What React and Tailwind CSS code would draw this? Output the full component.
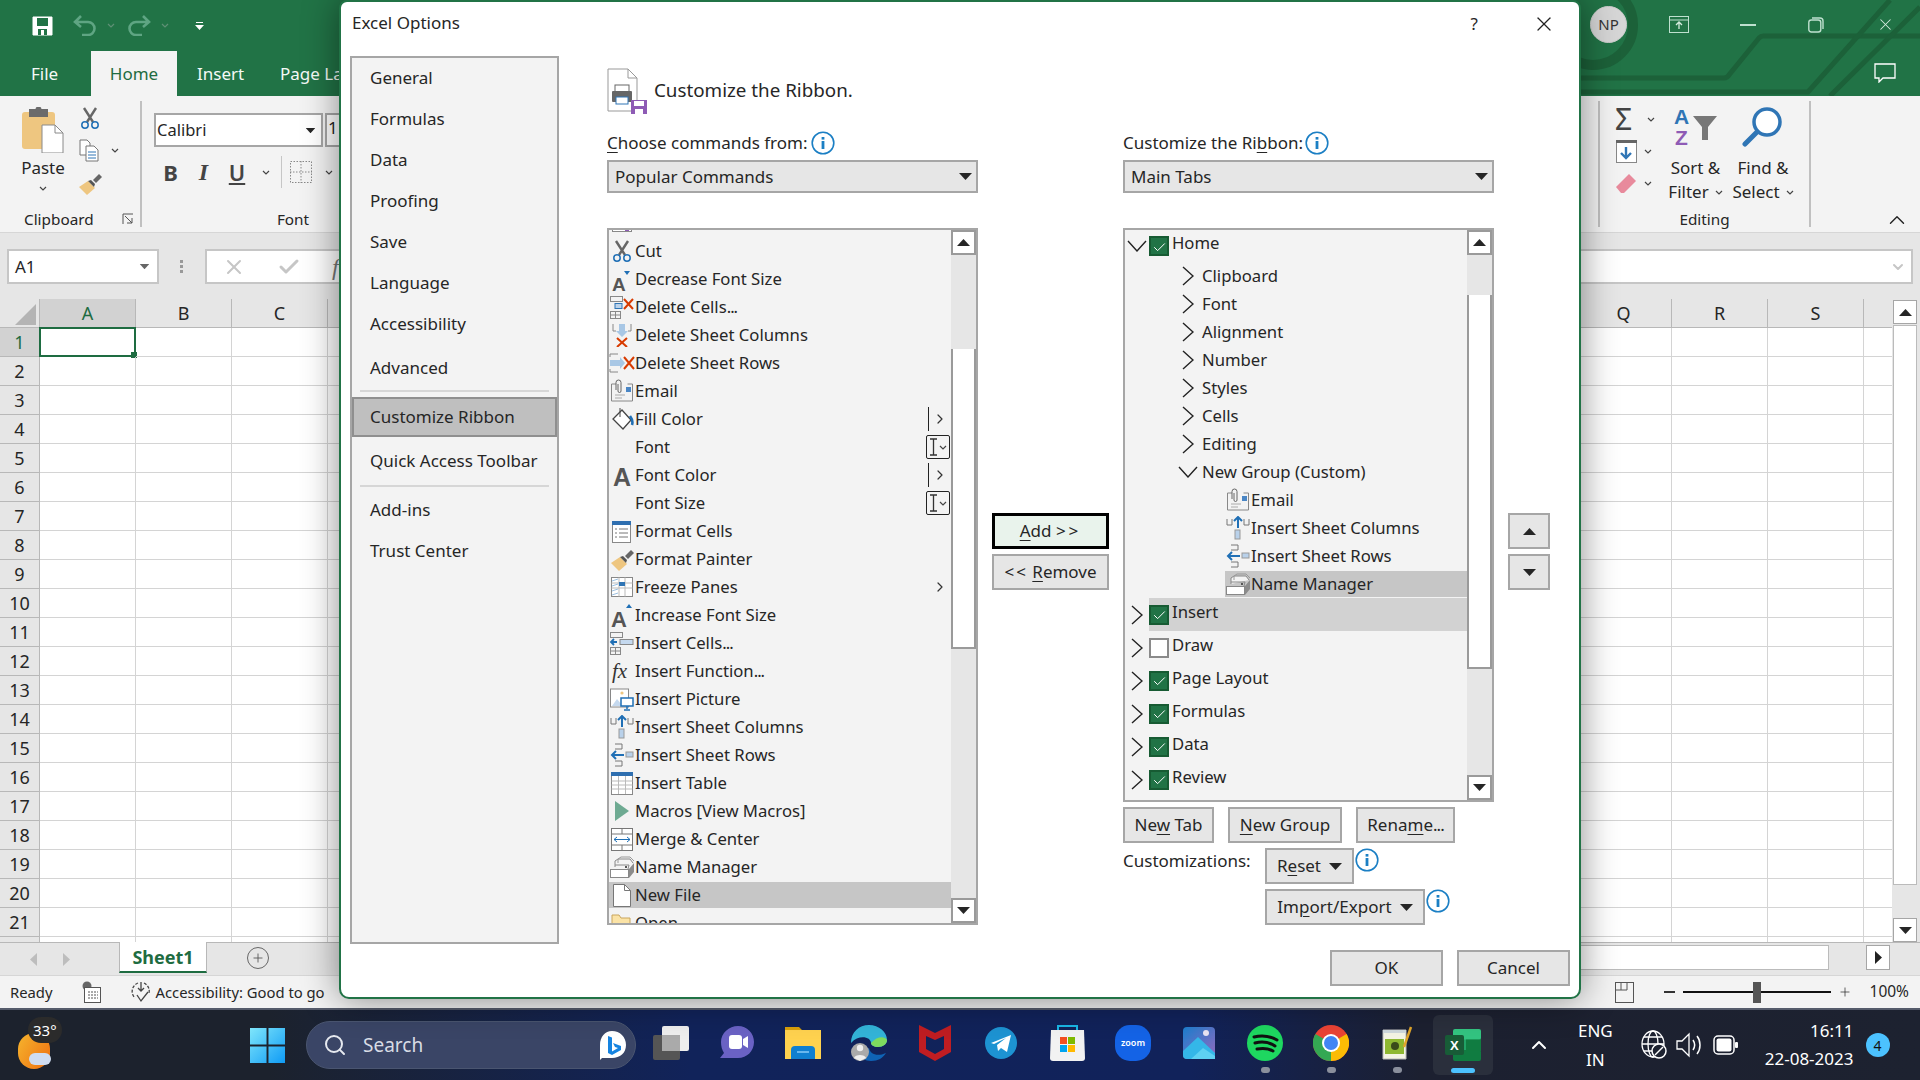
import { Check, ChevronDown, ChevronRight, ChevronUp, Plus, Search, X } from "lucide-react";

const Ico = ({ w = 24, h = 24, children, className = "" }) => (
  <svg width={w} height={h} viewBox={`0 0 ${w} ${h}`} fill="none" className={`shrink-0 ${className}`}>
    {children}
  </svg>
);

const SmallChev = ({ className = "" }) => (
  <svg width="8" height="5" viewBox="0 0 8 5" fill="none" className={`shrink-0 ${className}`}>
    <path d="M1 1l3 3 3-3" stroke="#444" strokeWidth="1.2" />
  </svg>
);

const Tri = ({ up = false, className = "" }) => (
  <svg width="13" height="7" viewBox="0 0 13 7" className={`shrink-0 ${className}`}>
    <path d={up ? "M0 7h13L6.5 0z" : "M0 0h13L6.5 7z"} fill="#262626" />
  </svg>
);

const Info = () => (
  <svg width="24" height="24" viewBox="0 0 24 24" fill="none" className="shrink-0">
    <circle cx="12" cy="12" r="10.8" stroke="#1b7fc4" strokeWidth="1.6" fill="#fff" />
    <rect x="10.6" y="10" width="2.8" height="8" fill="#1b7fc4" />
    <rect x="10.6" y="6" width="2.8" height="2.6" fill="#1b7fc4" />
  </svg>
);

const Dots = () => <span className="tracking-[-1px]">...</span>;

/* ---------- command icons ---------- */
const CutIcon = () => (
  <Ico>
    <path d="M6 2l9 14M18 2L9 16" stroke="#666" strokeWidth="2.4" />
    <circle cx="7" cy="19" r="3.2" stroke="#1f6fb5" strokeWidth="1.5" />
    <circle cx="17" cy="19" r="3.2" stroke="#1f6fb5" strokeWidth="1.5" />
  </Ico>
);
const LetterA = ({ size = 22, x = 1, y = 23, extra }) => (
  <Ico>
    <text x={x} y={y} fontSize={size} fontWeight="700" fill="#555" fontFamily="Liberation Sans, sans-serif">A</text>
    {extra}
  </Ico>
);
const DecFont = () => <LetterA size={19} x={2} y={24} extra={<path d="M14 4h6l-3 4z" fill="#1f6fb5" />} />;
const IncFont = () => <LetterA size={22} x={1} y={24} extra={<path d="M16 5h6l-3-4z" fill="#1f6fb5" />} />;
const FontColor = () => <LetterA size={25} x={3} y={23} />;
const Cells = () => (
  <g stroke="#888" strokeWidth="1" fill="#f3f3f3">
    <rect x="1.5" y="1.5" width="12" height="5" />
    <rect x="1.5" y="16.5" width="10" height="7" />
    <path d="M6.5 16.5v7M1.5 20h10" />
  </g>
);
const DelCells = () => (
  <Ico w={26}>
    <Cells />
    <rect x="6" y="8.5" width="7" height="5" stroke="#2f75b5" fill="#bcd3ea" />
    <path d="M15 4l9 10M24 4l-9 10" stroke="#d83b01" strokeWidth="2" />
  </Ico>
);
const DelCols = () => (
  <Ico>
    <path d="M3 1v7h3M21 1v7h-3" stroke="#888" />
    <path d="M9 1h6v7h3l-6 6-6-6h3z" fill="#a8c7e5" />
    <path d="M7 15l10 9M17 15L7 24" stroke="#d83b01" strokeWidth="2" />
  </Ico>
);
const DelRows = () => (
  <Ico w={26}>
    <path d="M9 3H1v3M9 21H1v-3" stroke="#888" />
    <path d="M1 9h10v-3l5 6-5 6v-3H1z" fill="#a8c7e5" />
    <path d="M15 6l10 12M25 6L15 18" stroke="#d83b01" strokeWidth="2" />
  </Ico>
);
const EmailIcon = () => (
  <Ico w={24}>
    <path d="M6 5H1.500v17h21V5h-5" stroke="#888" />
    <path d="M6 11V3.500a2.500 2.500 0 015 0V12a1.500 1.500 0 01-3 0V5" stroke="#666" strokeWidth="1" />
    <rect x="16" y="8" width="5" height="5" fill="#4a86c5" />
    <path d="M5 16h10M5 19h7" stroke="#aaa" />
  </Ico>
);
const FillIcon = () => (
  <Ico>
    <path d="M12 3l9 10-8 9-10-10z" stroke="#444" strokeWidth="1.3" fill="#fff" />
    <path d="M10 1v9" stroke="#444" />
    <path d="M20 9c3 4 3 6 2 9" stroke="#1f6fb5" strokeWidth="2.6" />
  </Ico>
);
const CursorBox = () => (
  <div className="flex h-[24px] w-[24px] items-center justify-center gap-[1px] rounded-[2px] border-[1.5px] border-[#222] bg-[#f3f3f3]">
    <svg width="9" height="18" viewBox="0 0 9 18" fill="none"><path d="M1 1h7M1 17h7M4.5 1v16" stroke="#333" strokeWidth="1.3" /></svg>
    <SmallChev />
  </div>
);
const FormatCells = () => (
  <Ico>
    <rect x="2.5" y="2.5" width="18" height="21" stroke="#888" fill="#fff" />
    <rect x="2" y="2" width="19" height="4" fill="#2f6fb0" />
    <path d="M5 10h2M9 10h9M5 14h2M9 14h9M5 18h2M9 18h9" stroke="#777" />
  </Ico>
);
const PainterIcon = () => (
  <Ico w={24}>
    <path d="M1 16l9-6 7 7-8 7z" fill="#eec680" />
    <path d="M10 10l3-1 4 4-1 3z" fill="#555" />
    <path d="M15 9l6-6 3 3-6 6z" fill="#666" />
  </Ico>
);
const FreezeIcon = () => (
  <Ico w={24}>
    <rect x="1.5" y="2.5" width="21" height="19" stroke="#888" fill="#fff" />
    <path d="M1.5 8h21M1.5 13h21M9 2.5v19M15 2.5v19" stroke="#bbb" />
    <rect x="9" y="7" width="6" height="4" fill="#2f75b5" />
    <path d="M2 6l6-2M2 11l6-2M2 16l6-2M2 20l6-2" stroke="#9bbfe0" />
  </Ico>
);
const InsCells = () => (
  <Ico w={26}>
    <Cells />
    <rect x="11" y="8.5" width="13" height="5" stroke="#888" fill="#c5d9ef" />
    <path d="M8 11H2m3-3l-3 3 3 3" stroke="#1f6fb5" strokeWidth="1.8" />
  </Ico>
);
const FxIcon = () => (
  <Ico>
    <text x="2" y="19" fontSize="21" fontStyle="italic" fontFamily="Liberation Serif, serif" fill="#333">fx</text>
  </Ico>
);
const InsPicture = () => (
  <Ico w={26}>
    <rect x="1.5" y="2" width="18" height="18" stroke="#888" fill="#fff" />
    <circle cx="13" cy="6" r="1.6" fill="#eec680" />
    <path d="M3 19l5-7 5 6v1z" fill="#c5d9ef" />
    <rect x="12" y="11" width="12" height="8" stroke="#1f6fb5" fill="#fff" strokeWidth="1.5" />
    <path d="M18 19v3M15 23h6" stroke="#1f6fb5" strokeWidth="1.5" />
  </Ico>
);
const InsCols = () => (
  <Ico>
    <path d="M1 3v6h5V3M18 3v6h5V3" stroke="#777" />
    <path d="M12 1v11M8 5l4-4 4 4" stroke="#1f6fb5" strokeWidth="2" />
    <rect x="9" y="14" width="5" height="9" stroke="#999" fill="#b9d1ea" />
  </Ico>
);
const InsRows = () => (
  <Ico>
    <path d="M5 1h7v5H5M5 18h7v5H5" stroke="#777" />
    <path d="M2 12h12M6 8l-4 4 4 4" stroke="#1f6fb5" strokeWidth="2" />
    <rect x="16" y="9" width="7" height="5" stroke="#999" fill="#b9d1ea" />
  </Ico>
);
const InsTable = () => (
  <Ico>
    <rect x="1.500" y="1.5" width="21" height="22" stroke="#888" fill="#fff" />
    <rect x="1" y="1" width="22" height="4" fill="#2f6fb0" />
    <path d="M1.5 10h21M1.5 14h21M1.5 18h21M8.500 5v18M15.500 5v18" stroke="#bbb" />
  </Ico>
);
const MacroIcon = () => (
  <Ico>
    <path d="M5 2l14 10L5 22z" fill="#6eaa92" />
  </Ico>
);
const MergeIcon = () => (
  <Ico>
    <rect x="1.500" y="1.5" width="21" height="22" stroke="#777" fill="#fff" />
    <path d="M1.5 7h21M1.5 18h21M12 1.500V7M12 18v5.500" stroke="#777" />
    <path d="M4 12.500h16M7 10l-3 2.500L7 15M17 10l3 2.500L17 15" stroke="#1f6fb5" />
  </Ico>
);
const NameMgr = () => (
  <Ico w={25}>
    <path d="M5 12V6l3-2h12l3 4" stroke="#888" fill="#f3f3f3" />
    <path d="M8 8V4l3-2h9l4 4" stroke="#999" />
    <path d="M5 10h14l-1 4" stroke="#888" />
    <rect x="0.500" y="14.500" width="18" height="8" stroke="#888" fill="#fff" />
    <path d="M19 14l5-6v9l-5 6z" fill="#8b8b8b" />
    <rect x="15" y="11" width="2" height="2" fill="#555" />
  </Ico>
);
const NewFile = () => (
  <Ico>
    <path d="M3.500 1.500h11l6 6v16h-17z" stroke="#777" fill="#fff" />
    <path d="M14.500 1.500v6h6" stroke="#777" />
  </Ico>
);
const OpenIcon = () => (
  <Ico>
    <path d="M2 8V4h7l2 3h9v8H2z" stroke="#c9a55c" fill="#fbe3a6" />
  </Ico>
);
const ClippedTop = () => (
  <Ico>
    <rect x="2.500" y="17" width="19" height="3.500" stroke="#888" fill="#fff" />
    <rect x="15" y="18" width="4" height="2" fill="#8e5bb5" />
  </Ico>
);

const CmdRow = ({ icon, label, suffix, selected }) => (
  <div className="flex h-[28px] items-center">
    <div className={`flex h-[26px] w-full items-center ${selected ? "bg-[#c6c6c6]" : ""}`}>
      <div className="flex w-[26px] shrink-0 justify-center overflow-visible">{icon}</div>
      <span className="flex-1 whitespace-nowrap">{label}</span>
      {suffix === "split" && (
        <div className="mr-[3px] flex items-center gap-[3px]">
          <div className="h-[24px] w-[1.5px] bg-[#222]" />
          <ChevronRight size={16} color="#333" strokeWidth={1.8} />
        </div>
      )}
      {suffix === "cursor" && <div className="mr-[1px]"><CursorBox /></div>}
      {suffix === "more" && <ChevronRight size={16} color="#333" strokeWidth={1.8} className="mr-[3px]" />}
    </div>
  </div>
);

const commands = [
  { label: "", icon: <ClippedTop /> },
  { label: "Cut", icon: <CutIcon /> },
  { label: "Decrease Font Size", icon: <DecFont /> },
  { label: <>Delete Cells<Dots /></>, icon: <DelCells /> },
  { label: "Delete Sheet Columns", icon: <DelCols /> },
  { label: "Delete Sheet Rows", icon: <DelRows /> },
  { label: "Email", icon: <EmailIcon /> },
  { label: "Fill Color", icon: <FillIcon />, suffix: "split" },
  { label: "Font", icon: null, suffix: "cursor" },
  { label: "Font Color", icon: <FontColor />, suffix: "split" },
  { label: "Font Size", icon: null, suffix: "cursor" },
  { label: "Format Cells", icon: <FormatCells /> },
  { label: "Format Painter", icon: <PainterIcon /> },
  { label: "Freeze Panes", icon: <FreezeIcon />, suffix: "more" },
  { label: "Increase Font Size", icon: <IncFont /> },
  { label: <>Insert Cells<Dots /></>, icon: <InsCells /> },
  { label: <>Insert Function<Dots /></>, icon: <FxIcon /> },
  { label: "Insert Picture", icon: <InsPicture /> },
  { label: "Insert Sheet Columns", icon: <InsCols /> },
  { label: "Insert Sheet Rows", icon: <InsRows /> },
  { label: "Insert Table", icon: <InsTable /> },
  { label: "Macros [View Macros]", icon: <MacroIcon /> },
  { label: "Merge & Center", icon: <MergeIcon /> },
  { label: "Name Manager", icon: <NameMgr /> },
  { label: "New File", icon: <NewFile />, selected: true },
  { label: "Open", icon: <OpenIcon /> },
];

const navTop = ["General", "Formulas", "Data", "Proofing", "Save", "Language", "Accessibility"];

const Scrollbar = ({ track1, thumb, track2, downH = 25 }) => (
  <div className="flex h-full w-[25px] shrink-0 flex-col">
    <div className="flex h-[25px] shrink-0 items-center justify-center border-2 border-[#9a9a9a] bg-white"><Tri up /></div>
    <div className="shrink-0 bg-[#e6e6e6]" style={{ height: track1 }} />
    <div className="shrink-0 border-x-2 border-b-2 border-[#9a9a9a] bg-white" style={{ height: thumb }} />
    <div className="shrink-0 bg-[#e6e6e6]" style={{ height: track2 }} />
    <div className="flex shrink-0 items-center justify-center border-2 border-[#9a9a9a] bg-white" style={{ height: downH }}><Tri /></div>
  </div>
);

const Btn = ({ children, className = "" }) => (
  <div className={`flex h-[36px] items-center justify-center border-2 border-[#a6a6a6] bg-[#e6e6e6] text-[17px] ${className}`}>
    {children}
  </div>
);

const U = ({ children }) => <span className="underline decoration-1 underline-offset-[3px]">{children}</span>;

const Dropdown = ({ label }) => (
  <div className="mt-[4px] flex h-[33px] items-center justify-between border-2 border-[#a6a6a6] bg-[#e6e6e6] pl-[6px] pr-[4px] text-[17px]">
    <span>{label}</span>
    <Tri />
  </div>
);

const ChevR = ({ className = "" }) => (
  <svg width="12" height="20" viewBox="0 0 12 20" fill="none" className={`shrink-0 ${className}`}>
    <path d="M1 1l10 9-10 9" stroke="#222" strokeWidth="1.4" />
  </svg>
);
const ChevD = ({ className = "" }) => (
  <svg width="20" height="12" viewBox="0 0 20 12" fill="none" className={`shrink-0 ${className}`}>
    <path d="M1 1l9 10 9-10" stroke="#222" strokeWidth="1.4" />
  </svg>
);

const Tick = ({ on = true }) =>
  on ? (
    <div className="flex h-[20px] w-[20px] shrink-0 items-center justify-center border-2 border-[#175b33] bg-[#217346]">
      <Check size={15} color="#fff" strokeWidth={1.6} className="mt-[2px]" />
    </div>
  ) : (
    <div className="h-[20px] w-[20px] shrink-0 border-2 border-[#8a8a8a] bg-white" />
  );

const TabRow = ({ label, open, on = true, selected, h = 33 }) => (
  <div className="flex items-center" style={{ height: h }}>
    <div className="flex w-[24px] shrink-0 justify-center">{open ? <ChevD /> : <ChevR />}</div>
    <div className={`flex h-full flex-1 items-center ${selected ? "bg-[#d2d2d2]" : ""}`}>
      <Tick on={on} />
      <span className="mb-[6px] ml-[3px]">{label}</span>
    </div>
  </div>
);

const GroupRow = ({ label, open }) => (
  <div className="flex h-[28px] items-center pl-[49px]">
    <div className="flex w-[28px] shrink-0 justify-center">{open ? <ChevD /> : <ChevR />}</div>
    <span>{label}</span>
  </div>
);

const LeafRow = ({ icon, label, selected }) => (
  <div className="flex h-[28px] items-center pl-[100px]">
    <div className={`flex h-[26px] flex-1 items-center ${selected ? "bg-[#c6c6c6]" : ""}`}>
      <div className="flex w-[26px] shrink-0 justify-center">{icon}</div>
      <span>{label}</span>
    </div>
  </div>
);

const HeadIcon = () => (
  <svg width="40" height="46" viewBox="0 0 40 46" fill="none">
    <path d="M1 1h20l9 9v33H1z" stroke="#999" fill="#fff" />
    <path d="M21 1v9h9" stroke="#999" />
    <rect x="8" y="17" width="14" height="7" stroke="#666" fill="#fff" />
    <rect x="5" y="23" width="20" height="11" rx="1" fill="#666" />
    <rect x="9" y="29" width="12" height="7" stroke="#2f75b5" fill="#fff" />
    <path d="M24 32h16v14H24z" fill="#8e5bb5" />
    <rect x="27" y="33" width="10" height="5" fill="#fff" />
    <rect x="28" y="41" width="8" height="5" fill="#fff" />
  </svg>
);

const Dialog = () => (
  <div className="absolute left-[339px] top-0 flex h-[999px] w-[1242px] flex-col rounded-b-[10px] rounded-t-[8px] border-2 border-[#217346] bg-white text-[17px] text-[#262626] shadow-[0_0_36px_rgba(0,0,0,0.45)]">
    <div className="flex h-[54px] shrink-0 items-start justify-between">
      <span className="ml-[11px] mt-[8px] text-[17px] leading-[26px]">Excel Options</span>
      <div className="mr-[23px] mt-[10px] flex items-center gap-[54px]">
        <span className="text-[17px] leading-[22px]">?</span>
        <X size={24} strokeWidth={1.3} color="#222" />
      </div>
    </div>
    <div className="flex h-[894px] shrink-0">
      <div className="ml-[9px] h-[888px] w-[209px] shrink-0 border-2 border-[#a6a6a6] bg-[#f3f3f3]">
        <div className="-mt-[1px]">
          {navTop.map((item) => (
            <div key={item} className="flex h-[41px] items-center pl-[18px]">{item}</div>
          ))}
        </div>
        <div className="mt-[3px] flex h-[41px] items-center pl-[18px]">Advanced</div>
        <div className="mx-[8px] mt-[2px] h-[2px] bg-[#d6d6d6]" />
        <div className="mt-[5px] flex h-[40px] items-center border-2 border-[#8f8f8f] bg-[#bfbfbf] pl-[16px]">Customize Ribbon</div>
        <div className="flex h-[48px] items-center pl-[18px]">Quick Access Toolbar</div>
        <div className="mx-[8px] h-[2px] bg-[#d6d6d6]" />
        <div className="mt-[2px] flex h-[41px] items-center pl-[18px]">Add-ins</div>
        <div className="flex h-[41px] items-center pl-[18px]">Trust Center</div>
      </div>

      <div className="ml-[48px] w-[371px] shrink-0">
        <div className="flex h-[74px] items-start pt-[12px]">
          <HeadIcon />
          <span className="ml-[7px] mt-[8px] text-[18.800px] leading-[28px]">Customize the Ribbon.</span>
        </div>
        <div className="flex h-[26px] items-center">
          <span className="mr-[3px]"><U>C</U>hoose commands from:</span>
          <Info />
        </div>
        <Dropdown label="Popular Commands" />
        <div className="mt-[35px] flex h-[697px] overflow-hidden border-2 border-[#a6a6a6] bg-[#f3f3f3] text-[16.700px]">
          <div className="flex-1 overflow-hidden">
            <div className="-mt-[21px]">
              {commands.map((c, i) => (
                <CmdRow key={i} {...c} />
              ))}
            </div>
          </div>
          <Scrollbar track1={94} thumb={300} track2={249} downH={25} />
        </div>
      </div>

      <div className="ml-[14px] w-[117px] shrink-0 pt-[457px]">
        <div className="flex h-[36px] items-center justify-center border-[3px] border-black bg-[#e9f3ec]">
          <span><U>A</U>dd <span className="tracking-[3px]">&gt;&gt;</span></span>
        </div>
        <Btn className="mt-[5px]"><span><span className="tracking-[2px]">&lt;&lt;</span> <U>R</U>emove</span></Btn>
      </div>

      <div className="ml-[14px] w-[371px] shrink-0">
        <div className="h-[74px]" />
        <div className="flex h-[26px] items-center">
          <span className="mr-[2px]">Customize the Ri<U>b</U>bon:</span>
          <Info />
        </div>
        <Dropdown label="Main Tabs" />
        <div className="mt-[35px] flex h-[574px] overflow-hidden border-2 border-[#a6a6a6] bg-[#f3f3f3] text-[16.700px]">
          <div className="flex-1 overflow-hidden">
            <TabRow label="Home" open h={32} />
            {["Clipboard", "Font", "Alignment", "Number", "Styles", "Cells", "Editing"].map((g) => (
              <GroupRow key={g} label={g} />
            ))}
            <GroupRow label="New Group (Custom)" open />
            <LeafRow icon={<EmailIcon />} label="Email" />
            <LeafRow icon={<InsCols />} label="Insert Sheet Columns" />
            <LeafRow icon={<InsRows />} label="Insert Sheet Rows" />
            <LeafRow icon={<NameMgr />} label="Name Manager" selected />
            <TabRow label="Insert" selected />
            <TabRow label="Draw" on={false} />
            <TabRow label="Page Layout" />
            <TabRow label="Formulas" />
            <TabRow label="Data" />
            <TabRow label="Review" />
          </div>
          <Scrollbar track1={40} thumb={374} track2={106} downH={25} />
        </div>
        <div className="mt-[5px] flex">
          <Btn className="w-[91px]"><span>Ne<U>w</U> Tab</span></Btn>
          <Btn className="ml-[14px] w-[114px]"><span><U>N</U>ew Group</span></Btn>
          <Btn className="ml-[14px] w-[99px]"><span>Rena<U>m</U>e<Dots /></span></Btn>
        </div>
        <div className="mt-[5px] flex">
          <span className="w-[142px] shrink-0 pt-[1px] leading-[24px]">Customizations:</span>
          <div className="flex flex-col gap-[5px]">
            <div className="flex items-start">
              <Btn className="w-[89px] gap-[8px]"><span>R<U>e</U>set</span><Tri /></Btn>
              <div className="ml-[1px]"><Info /></div>
            </div>
            <div className="flex items-start">
              <Btn className="w-[160px] gap-[8px]"><span>Im<U>p</U>ort/Export</span><Tri /></Btn>
              <div className="ml-[1px]"><Info /></div>
            </div>
          </div>
        </div>
      </div>

      <div className="ml-[14px] w-[42px] shrink-0 pt-[457px]">
        <Btn><Tri up /></Btn>
        <Btn className="mt-[5px]"><Tri /></Btn>
      </div>
    </div>
    <div className="flex justify-end gap-[14px] pr-[9px]">
      <Btn className="w-[113px]">OK</Btn>
      <Btn className="w-[113px]">Cancel</Btn>
    </div>
  </div>
);

/* ---------- excel behind the dialog ---------- */
const SaveIcon = () => (
  <svg width="21" height="20" viewBox="0 0 21 20" fill="none">
    <path d="M1 1h19v18H1z" fill="#fff" stroke="#fff" />
    <rect x="5" y="2" width="11" height="8" fill="#217346" />
    <rect x="6" y="13" width="9" height="6" fill="#217346" />
    <rect x="9" y="14" width="3" height="5" fill="#fff" />
  </svg>
);

const QuickBar = () => (
  <div className="flex items-center pl-[32px] pt-[9px]">
    <SaveIcon />
    <svg width="24" height="21" viewBox="0 0 24 21" fill="none" className="ml-[20px]">
      <path d="M8 1L2 7l6 5M2 7h13a6.500 6.500 0 010 13H9" stroke="#5fa583" strokeWidth="2.600" />
    </svg>
    <SmallChev className="ml-[10px] opacity-40 invert" />
    <svg width="24" height="21" viewBox="0 0 24 21" fill="none" className="ml-[12px]">
      <path d="M16 1l6 6-6 5M22 7H9a6.500 6.500 0 000 13h6" stroke="#5fa583" strokeWidth="2.600" />
    </svg>
    <SmallChev className="ml-[10px] opacity-40 invert" />
    <svg width="9" height="8" viewBox="0 0 9 8" className="ml-[26px]">
      <path d="M1 0h7v1H1zM0 3h9L4.500 8z" fill="#fff" />
    </svg>
  </div>
);

const WindowControls = () => (
  <div className="flex items-center">
    <div className="flex h-[37px] w-[37px] items-center justify-center rounded-full border border-[#ccc] bg-[#d6d6d6] text-[15px] text-[#333]">NP</div>
    <svg width="20" height="17" viewBox="0 0 20 17" fill="none" className="ml-[42px]">
      <rect x="0.500" y="0.500" width="19" height="16" stroke="#bfe0cf" />
      <path d="M0 4h20" stroke="#bfe0cf" />
      <path d="M10 13V7M7 9l3-3 3 3" stroke="#d6ecdf" strokeWidth="1.3" />
    </svg>
    <div className="ml-[51px] h-[2px] w-[16px] bg-[#bfe0cf]" />
    <svg width="16" height="16" viewBox="0 0 16 16" fill="none" className="ml-[52px]">
      <rect x="0.800" y="3" width="12" height="12" rx="2.500" stroke="#bfe0cf" strokeWidth="1.400" />
      <path d="M4 1h8a3 3 0 013 3v8" stroke="#bfe0cf" strokeWidth="1.400" />
    </svg>
    <X size={19} strokeWidth={1.300} color="#d6ecdf" className="ml-[52px] mr-[25px]" />
  </div>
);

const Circuit = () => (
  <svg width="380" height="96" viewBox="0 0 380 96" fill="none" className="absolute right-0 top-0">
    <g stroke="#1c6139" strokeWidth="5">
      <circle cx="53" cy="25" r="40" strokeWidth="10" />
      <path d="M0 78h184a6 6 0 005-3l30-37a6 6 0 015-2h156" />
      <path d="M0 92h268l82-92M290 96l90-89" />
    </g>
  </svg>
);

const TitleTabs = () => (
  <div className="relative h-[96px] shrink-0 bg-[#217346] text-[17px] text-[#f4f9f6]">
    <Circuit />
    <div className="relative flex h-[49px] items-start justify-between pt-[6px]">
      <QuickBar />
      <WindowControls />
    </div>
    <div className="relative flex h-[47px] items-end justify-between">
      <div className="flex h-[45px] items-center">
        <span className="ml-[31px] w-[60px]">File</span>
        <div className="flex h-[45px] w-[86px] items-center justify-center bg-[#f3f3f3] text-[#1e6c41]">Home</div>
        <span className="ml-[20px] w-[83px]">Insert</span>
        <span className="whitespace-nowrap">Page Layout</span>
      </div>
      <svg width="22" height="20" viewBox="0 0 22 20" fill="none" className="mb-[13px] mr-[24px]">
        <path d="M1 1h20v14H9l-4 4v-4H1z" stroke="#fff" strokeWidth="1.300" />
      </svg>
    </div>
  </div>
);

const PasteIcon = () => (
  <svg width="42" height="46" viewBox="0 0 42 46" fill="none">
    <rect x="0" y="5" width="33" height="37" rx="3" fill="#eec680" />
    <rect x="7" y="2" width="19" height="8" fill="#6b6b6b" />
    <circle cx="16.500" cy="2.500" r="3" fill="#6b6b6b" />
    <path d="M20 18h13l8 8v20H20z" fill="#fff" stroke="#8a8a8a" />
    <path d="M33 18v8h8" stroke="#8a8a8a" />
  </svg>
);

const CopyIcon = () => (
  <svg width="20" height="23" viewBox="0 0 20 23" fill="none">
    <path d="M1 1h7l3 3v12H1z" fill="#fff" stroke="#777" />
    <path d="M7 7h8l4 4v11H7z" fill="#fff" stroke="#777" />
    <path d="M9 13h8M9 16h8M9 19h8" stroke="#2f75b5" />
  </svg>
);

const FontRow = () => (
  <div className="flex h-[46px] items-center pl-[12px] text-[#444]">
    <span className="flex w-[33px] justify-center text-[22px] font-bold">B</span>
    <span className="flex w-[33px] justify-center font-['Liberation_Serif',serif] text-[24px] font-bold italic">I</span>
    <span className="flex w-[34px] justify-center text-[22px] font-semibold underline decoration-2 underline-offset-2">U</span>
    <SmallChev className="ml-[8px]" />
    <div className="ml-[11px] h-[32px] w-[1px] bg-[#c6c6c6]" />
    <svg width="22" height="22" viewBox="0 0 22 22" fill="none" className="ml-[8px]">
      <rect x="0.500" y="0.500" width="21" height="21" stroke="#888" strokeDasharray="1.500 1.500" />
      <path d="M11 0v22M0 11h22" stroke="#888" strokeDasharray="1.500 1.500" />
    </svg>
    <SmallChev className="ml-[13px]" />
  </div>
);

const Ribbon = () => (
  <div className="flex h-[137px] shrink-0 justify-between border-b border-[#d6d6d6] bg-[#f3f3f3] py-[5px] text-[17px]">
    <div className="flex">
      <div className="flex w-[142px] flex-col border-r-2 border-[#c0c0c0]">
        <div className="flex h-[111px]">
          <div className="flex w-[78px] flex-col items-center pl-[8px] pt-[6px]">
            <PasteIcon />
            <span className="mt-[4px] leading-[22px]">Paste</span>
            <SmallChev className="mt-[7px]" />
          </div>
          <div className="flex flex-col items-start pt-[5px]">
            <CutIcon />
            <div className="mt-[9px] flex items-center gap-[12px] pl-[1px]"><CopyIcon /><SmallChev /></div>
            <div className="mt-[9px]"><PainterIcon /></div>
          </div>
        </div>
        <div className="mt-[3px] flex h-[16px] items-center justify-between pl-[24px] pr-[6px] text-[15.300px] leading-[16px]">
          <span>Clipboard</span>
          <svg width="12" height="12" viewBox="0 0 12 12" fill="none"><path d="M1 11V1h10M3 3l7 7M10 5v5H5" stroke="#555" /></svg>
        </div>
      </div>
      <div className="flex w-[302px] flex-col">
        <div className="flex h-[51px] gap-[2px] pl-[12px] pt-[12px]">
          <div className="flex h-[34px] w-[169px] items-center justify-between border-2 border-[#a6a6a6] bg-white pl-[1px] pr-[4px] text-[16.500px]">
            Calibri<Tri className="scale-75" />
          </div>
          <div className="h-[34px] w-[20px] border-2 border-[#a6a6a6] bg-white pl-[1px] text-[17px]">1</div>
        </div>
        <FontRow />
        <div className="mt-[17px] flex h-[16px] items-center justify-center text-[15.300px] leading-[16px]">Font</div>
      </div>
    </div>
    <div className="flex">
      <div className="flex w-[213px] flex-col border-x-2 border-[#c0c0c0]">
        <div className="flex h-[111px]">
          <div className="flex w-[61px] flex-col items-start pl-[15px] pt-[5px]">
            <div className="flex items-center gap-[15px] text-[30px] leading-[26px] text-[#444]"><span>Σ</span><SmallChev /></div>
            <div className="mt-[8px] flex items-center gap-[7px] pl-[1px]">
              <svg width="21" height="23" viewBox="0 0 21 23" fill="none"><rect x="0.500" y="0.500" width="20" height="22" fill="#fff" stroke="#888" /><rect width="21" height="3" fill="#666" /><path d="M10 7v11M5 13l5 5 5-5" stroke="#2f75b5" strokeWidth="2.400" /></svg>
              <SmallChev />
            </div>
            <div className="mt-[10px] flex items-center gap-[7px] pl-[1px]">
              <svg width="21" height="21" viewBox="0 0 21 21"><path d="M0 14L13 1l7 7L8 20H5z" fill="#e88a9c" /></svg>
              <SmallChev />
            </div>
          </div>
          <div className="flex w-[69px] flex-col items-center pt-[5px] leading-[24px]">
            <svg width="44" height="40" viewBox="0 0 44 40" fill="none">
              <text x="0" y="18" fontSize="21" fontWeight="700" fill="#2f75b5" fontFamily="Liberation Sans, sans-serif">A</text>
              <text x="1" y="39" fontSize="21" fontWeight="700" fill="#8e5bb5" fontFamily="Liberation Sans, sans-serif">Z</text>
              <path d="M19 10h24l-9 11v13h-6V21z" fill="#777" />
            </svg>
            <span className="mt-[10px] whitespace-nowrap">Sort &amp;</span>
            <span className="flex items-center gap-[6px] whitespace-nowrap">Filter<SmallChev /></span>
          </div>
          <div className="flex w-[66px] flex-col items-center pt-[5px] leading-[24px]">
            <svg width="42" height="42" viewBox="0 0 42 42" fill="none">
              <circle cx="25" cy="16" r="13" stroke="#2f75b5" strokeWidth="3.500" fill="#fff" />
              <path d="M15 26L3 38" stroke="#2f75b5" strokeWidth="5" strokeLinecap="round" />
            </svg>
            <span className="mt-[8px] whitespace-nowrap">Find &amp;</span>
            <span className="flex items-center gap-[6px] whitespace-nowrap">Select<SmallChev /></span>
          </div>
        </div>
        <div className="mt-[3px] flex h-[16px] items-center justify-center text-[15.300px] leading-[16px]">Editing</div>
      </div>
      <div className="flex w-[109px] items-end justify-end pr-[10px]">
        <ChevronUp size={26} strokeWidth={1.300} color="#222" className="-mb-[6px]" />
      </div>
    </div>
  </div>
);

const FormulaBar = () => (
  <div className="flex h-[66px] shrink-0 items-start bg-[#e6e6e6] pl-[7px] pr-[7px] pt-[16px] text-[17px]">
    <div className="flex h-[35px] w-[152px] items-center justify-between border-2 border-[#c6c6c6] bg-white pl-[6px] pr-[6px]">
      A1<Tri className="scale-75 opacity-70" />
    </div>
    <div className="ml-[21px] flex h-[35px] flex-col items-center justify-center gap-[2px]">
      <div className="h-[3px] w-[3px] bg-[#999]" /><div className="h-[3px] w-[3px] bg-[#999]" /><div className="h-[3px] w-[3px] bg-[#999]" />
    </div>
    <div className="ml-[22px] flex h-[35px] flex-1 items-center justify-between border-2 border-[#c6c6c6] bg-white pl-[15px] pr-[5px]">
      <div className="flex items-center gap-[31px]">
        <X size={24} color="#c6c6c6" strokeWidth={2} />
        <Check size={24} color="#c6c6c6" strokeWidth={3} />
        <span className="font-['Liberation_Serif',serif] text-[24px] italic text-[#777]">f</span>
      </div>
      <ChevronDown size={16} color="#c6c6c6" strokeWidth={3} />
    </div>
  </div>
);

const letters = ["A", "B", "C", "D", "E", "F", "G", "H", "I", "J", "K", "L", "M", "N", "O", "P", "Q", "R", "S", "T"];
const rows = Array.from({ length: 22 }, (_, i) => i + 1);

const Sheet = () => (
  <div className="flex h-[643px] shrink-0 overflow-hidden bg-white">
    <div className="flex-1 overflow-hidden">
      <div className="flex h-[29px] bg-[#e6e6e6] text-[18px]">
        <div className="flex w-[40px] shrink-0 items-end justify-end border-b border-r border-[#b8b8b8] pb-[2px] pr-[3px]">
          <div className="h-[21px] w-[21px] bg-[#b4b4b4] [clip-path:polygon(100%_0,100%_100%,0_100%)]" />
        </div>
        {letters.map((l, i) => (
          <div key={l} className={`flex w-[96px] shrink-0 items-center justify-center border-b border-r border-[#b8b8b8] ${i === 0 ? "bg-[#d2d2d2] text-[#1e6c41]" : ""}`}>{l}</div>
        ))}
      </div>
      {rows.map((r) => (
        <div key={r} className="flex h-[29px]">
          <div className={`flex w-[40px] shrink-0 items-center justify-center border-b border-r border-[#b8b8b8] text-[18px] ${r === 1 ? "bg-[#d2d2d2] text-[#1e6c41]" : "bg-[#e6e6e6]"}`}>{r}</div>
          {letters.map((l, i) => (
            <div key={l} className="relative w-[96px] shrink-0 border-b border-r border-[#d4d4d4]">
              {r === 1 && i === 0 && (
                <div className="absolute -left-[1px] -top-[1px] h-[30px] w-[97px] border-2 border-[#1e6c41]">
                  <div className="absolute -bottom-[3px] -right-[3px] h-[6px] w-[6px] bg-[#1e6c41]" />
                </div>
              )}
            </div>
          ))}
        </div>
      ))}
    </div>
    <div className="flex w-[28px] shrink-0 flex-col bg-[#e6e6e6] pl-[1px] pr-[3px] pt-[1px]">
      <div className="flex h-[24px] shrink-0 items-center justify-center border border-[#a6a6a6] bg-white"><Tri up /></div>
      <div className="mt-[1px] h-[560px] shrink-0 border border-[#bbb] bg-white" />
      <div className="flex-1" />
      <div className="flex h-[24px] shrink-0 items-center justify-center border border-[#a6a6a6] bg-white"><Tri /></div>
    </div>
  </div>
);

const SheetTabs = () => (
  <div className="flex h-[33px] shrink-0 items-start justify-between border-t border-[#b8b8b8] bg-[#e6e6e6]">
    <div className="flex h-full items-start">
      <div className="flex h-full w-[119px] items-center justify-center gap-[26px] pr-[20px]">
        <svg width="7" height="13" viewBox="0 0 7 13"><path d="M7 0v13L0 6.500z" fill="#bdbdbd" /></svg>
        <svg width="7" height="13" viewBox="0 0 7 13"><path d="M0 0v13l7-6.500z" fill="#bdbdbd" /></svg>
      </div>
      <div className="-mt-[1px] flex h-[31px] w-[88px] items-center justify-center border-x border-b-2 border-[#b8b8b8] border-b-[#1e6c41] bg-white pt-[1px] text-[18px] font-bold text-[#1e6c41]">Sheet1</div>
      <div className="ml-[40px] mt-[4px] flex h-[22px] w-[22px] items-center justify-center rounded-full border border-[#666]">
        <Plus size={14} color="#555" strokeWidth={1.500} />
      </div>
    </div>
    <div className="flex items-start pr-[30px] pt-[2px]">
      <div className="mr-[37px] h-[25px] w-[260px] border border-[#bbb] bg-white" />
      <div className="flex h-[25px] w-[24px] items-center justify-center border border-[#a6a6a6] bg-white">
        <svg width="7" height="13" viewBox="0 0 7 13"><path d="M0 0v13l7-6.500z" fill="#222" /></svg>
      </div>
    </div>
  </div>
);

const StatusBar = () => (
  <div className="flex h-[33px] shrink-0 items-center justify-between border-t border-[#d6d6d6] bg-[#f3f3f3] pl-[10px] pr-[11px] text-[14.800px]">
    <div className="flex items-center">
      <span>Ready</span>
      <svg width="19" height="23" viewBox="0 0 19 23" fill="none" className="ml-[29px]">
        <circle cx="5" cy="5" r="4.500" fill="#666" />
        <rect x="2.500" y="6.500" width="16" height="15" fill="#fff" stroke="#555" />
        <path d="M6 11h10M6 14h10M6 17h10" stroke="#555" strokeDasharray="2 1" />
      </svg>
      <svg width="20" height="24" viewBox="0 0 20 24" fill="none" className="ml-[30px]">
        <path d="M7 3a9 9 0 00-3 15M13 3c4 2 6 6 5 10" stroke="#444" strokeDasharray="3 1.500" strokeWidth="1.300" />
        <path d="M10 2v9M7 8l3 3 3-3M6 15l4 6 7-9" stroke="#444" strokeWidth="1.300" />
      </svg>
      <span className="ml-[5px]">Accessibility: Good to go</span>
    </div>
    <div className="flex items-center">
      <svg width="19" height="21" viewBox="0 0 19 21" fill="none"><rect x="0.500" y="0.500" width="18" height="20" stroke="#555" fill="#f3f3f3" /><path d="M0 8h12V0M6 0v8" stroke="#555" /></svg>
      <div className="ml-[30px] h-[1.500px] w-[11px] bg-[#333]" />
      <div className="ml-[8px] flex h-[21px] w-[148px] items-center">
        <div className="h-[2px] w-[70px] bg-[#111]" />
        <div className="h-[21px] w-[8px] bg-[#555]" />
        <div className="h-[2px] flex-1 bg-[#111]" />
      </div>
      <Plus size={14} strokeWidth={1.200} color="#222" className="ml-[7px]" />
      <span className="ml-[18px] text-[15.500px]">100%</span>
    </div>
  </div>
);

/* ---------- taskbar ---------- */
const WinLogo = () => (
  <svg width="35" height="35" viewBox="0 0 36 36">
    <defs>
      <linearGradient id="wl" x1="0" y1="0" x2="1" y2="1">
        <stop offset="0" stopColor="#7fe6fb" />
        <stop offset="1" stopColor="#0f9bf5" />
      </linearGradient>
    </defs>
    <path d="M0 0h17v17H0zM19 0h17v17H19zM0 19h17v17H0zM19 19h17v17H19z" fill="url(#wl)" />
  </svg>
);

const BingIcon = () => (
  <svg width="30" height="30" viewBox="0 0 30 30">
    <path d="M15 1c8 0 14 6 14 14s-6 13-14 13H5l-2 2V15C3 7 8 1 15 1z" fill="#fff" />
    <path d="M11 6l4 1.500v14l6-3.500-3-1-2-4 8 3v4l-9 5-4-2z" fill="#1583e0" />
  </svg>
);

const taskIcons = [
  <svg key="tv" width="36" height="34" viewBox="0 0 36 34">
    <rect x="0" y="9" width="27" height="25" rx="2" fill="#555" />
    <rect x="9" y="0" width="27" height="25" rx="2" fill="#eee" />
    <rect x="9" y="9" width="18" height="16" fill="#aaa" />
  </svg>,
  <svg key="teams" width="34" height="34" viewBox="0 0 34 34">
    <path d="M18 0c9 0 16 7 16 16s-7 16-16 16H0l4-5C2 24 1 20 1 16 1 7 9 0 18 0z" fill="#6a62c4" />
    <rect x="9" y="9" width="13" height="14" rx="3" fill="#fff" />
    <path d="M23 13l5-3v12l-5-3z" fill="#fff" />
  </svg>,
  <svg key="files" width="36" height="32" viewBox="0 0 36 32">
    <path d="M0 0h14l3 3h19v29H0z" fill="#d99f0b" />
    <rect y="3" width="36" height="29" fill="#ffd24f" />
    <path d="M6 32V23a4 4 0 014-4h16a4 4 0 014 4v9z" fill="#0f7fd0" />
    <rect x="12" y="24" width="12" height="2" fill="#67b7ee" />
  </svg>,
  <svg key="edge" width="36" height="36" viewBox="0 0 36 36">
    <path d="M0 18C0 7 8 0 18 0c10 0 18 7 18 15 0 4-4 7-9 7-4 0-7-2-7-4 0-6-12-9-20 0z" fill="#33b4d8" />
    <path d="M36 15c0 4-4 7-9 7-4 0-7-2-7-4 6-7 14-7 16-3z" fill="#7ddb5e" />
    <path d="M20 36c7 0 12-3 15-8-9 4-16 1-17-5l-10 5c2 5 6 8 12 8z" fill="#0f63b5" />
    <circle cx="9" cy="27" r="9" fill="#aaa" />
    <circle cx="9" cy="23" r="3.200" fill="#eee" />
    <path d="M3 33c1-4 11-4 12 0l-6 3z" fill="#eee" />
  </svg>,
  <svg key="mc" width="32" height="36" viewBox="0 0 32 36">
    <path d="M0 0l16 8 16-8v27l-16 9L0 27zM7 11v13l9 5 9-5V11l-9 4z" fill="#c01d22" fillRule="evenodd" />
  </svg>,
  <svg key="tg" width="32" height="32" viewBox="0 0 32 32">
    <circle cx="16" cy="16" r="16" fill="#1d93d2" />
    <path d="M6 16L26 8l-4 17-6-4-3 3-1-6 9-7-12 6z" fill="#fff" />
  </svg>,
  <svg key="store" width="35" height="36" viewBox="0 0 35 36">
    <path d="M8 6V1h19v5" stroke="#19b6e6" strokeWidth="2" fill="none" />
    <path d="M1 5h33l1 28a3 3 0 01-3 3H3a3 3 0 01-3-3z" fill="#f2f2f2" />
    <path d="M10 12h7v7h-7z" fill="#f25022" /><path d="M18 12h7v7h-7z" fill="#7fba00" />
    <path d="M10 20h7v7h-7z" fill="#00a4ef" /><path d="M18 20h7v7h-7z" fill="#ffb900" />
  </svg>,
  <div key="zoom" className="flex h-[36px] w-[36px] items-center justify-center rounded-[15px] bg-[#1463e6] text-[9px] font-semibold text-white">zoom</div>,
  <svg key="photos" width="32" height="32" viewBox="0 0 32 32">
    <defs>
      <linearGradient id="ph" x1="0" y1="0" x2="1" y2="1">
        <stop offset="0" stopColor="#1b7fd0" />
        <stop offset="1" stopColor="#9368bd" />
      </linearGradient>
    </defs>
    <rect width="32" height="32" rx="4" fill="url(#ph)" />
    <circle cx="23" cy="6" r="3" fill="#e9e4f3" />
    <path d="M0 24l15-14 17 16v2a4 4 0 01-4 4H4a4 4 0 01-4-4z" fill="#34b7e8" />
    <path d="M8 32l12-11 12 8v3z" fill="#5ed1f2" />
  </svg>,
  <svg key="sp" width="36" height="36" viewBox="0 0 36 36">
    <circle cx="18" cy="18" r="18" fill="#1ed760" />
    <path d="M7 12c8-2 16-1 23 3M8 18c7-2 14-1 20 3M10 24c6-1 11-1 16 2" stroke="#111" strokeWidth="3" fill="none" strokeLinecap="round" />
  </svg>,
  <svg key="ch" width="36" height="36" viewBox="0 0 36 36">
    <circle cx="18" cy="18" r="18" fill="#ea4335" />
    <path d="M18 18L33.600 9A18 18 0 0118 36z" fill="#fbbc05" />
    <path d="M18 18L18 36A18 18 0 012.400 9z" fill="#34a853" />
    <circle cx="18" cy="18" r="9" fill="#fff" />
    <circle cx="18" cy="18" r="7" fill="#4285f4" />
  </svg>,
  <svg key="np" width="34" height="34" viewBox="0 0 34 34">
    <path d="M3 4h23v29H3z" fill="#f4f4e4" stroke="#bbb" />
    <path d="M3 4h23v3H3z" fill="#cfd8dc" />
    <rect x="5" y="13" width="19" height="15" fill="#8fb832" />
    <circle cx="15" cy="20" r="4" fill="#3a4a1a" />
    <path d="M31 1l-7 20" stroke="#e0a52a" strokeWidth="2.500" />
  </svg>,
];

const ExcelLogo = () => (
  <svg width="36" height="32" viewBox="0 0 36 32">
    <rect x="8" width="28" height="11" rx="2" fill="#33c481" />
    <rect x="8" y="10.500" width="28" height="11" fill="#21a366" />
    <rect x="8" y="21" width="28" height="11" rx="2" fill="#107c41" />
    <rect x="21" y="10.500" width="15" height="11" fill="#107c41" />
    <rect y="6" width="19" height="20" rx="2" fill="#185c37" />
    <text x="5" y="21" fontSize="13" fontWeight="700" fill="#fff" fontFamily="Liberation Sans, sans-serif">X</text>
  </svg>
);

const Taskbar = () => (
  <div className="flex h-[72px] shrink-0 items-center border-t-2 border-[#555b6b] bg-[linear-gradient(90deg,#1c222d_0%,#1c222d_14%,#11235a_36%,#11225a_62%,#1c2030_74%,#1d2230_100%)] text-white">
    <div className="relative ml-[18px] flex h-[60px] w-[36px] items-end">
      <div className="mb-[6px] h-[36px] w-[32px] rounded-full bg-[linear-gradient(120deg,#f6b52e,#ee6f10)]" />
      <div className="absolute bottom-[10px] left-[11px] h-[12px] w-[22px] rounded-full bg-[#cfdcf0]" />
      <div className="absolute left-[10px] top-[2px] rounded-full bg-[#2b2b2b] px-[5px] text-[15px] leading-[26px]">33°</div>
    </div>
    <div className="ml-[196px]"><WinLogo /></div>
    <div className="ml-[21px] flex h-[48px] w-[330px] items-center rounded-full border border-[#4a5570] bg-[#3a4566] pl-[16px] pr-[8px]">
      <Search size={24} color="#e6e9ef" strokeWidth={2} />
      <span className="ml-[16px] flex-1 text-[19px] text-[#d8dce5]">Search</span>
      <BingIcon />
    </div>
    <div className="ml-[2px] flex items-center">
      {taskIcons.map((icon, i) => (
        <div key={i} className="flex h-[66px] w-[66px] flex-col items-center pt-[9px]">
          <div className="flex h-[44px] items-center">{icon}</div>
          {i >= 9 && <div className="mt-[2px] h-[6px] w-[9px] rounded-full bg-[#8a8f9c]" />}
        </div>
      ))}
      <div className="ml-[3px] flex h-[60px] w-[60px] flex-col items-center rounded-[6px] bg-[#2a2f3c] pt-[14px]">
        <ExcelLogo />
        <div className="mt-[7px] h-[5px] w-[24px] rounded-full bg-[#4cc2ff]" />
      </div>
    </div>
    <ChevronUp size={24} color="#fff" strokeWidth={2} className="ml-[34px]" />
    <div className="ml-[27px] flex flex-col items-center text-[17px] leading-[29px]">
      <span>ENG</span>
      <span>IN</span>
    </div>
    <svg width="26" height="30" viewBox="0 0 26 30" fill="none" className="ml-[28px]">
      <ellipse cx="12" cy="14" rx="11" ry="13" stroke="#fff" strokeWidth="1.300" />
      <ellipse cx="12" cy="14" rx="5" ry="13" stroke="#fff" strokeWidth="1.300" />
      <path d="M1 14h22M3 7h18M3 21h18" stroke="#fff" strokeWidth="1.300" />
      <circle cx="18" cy="21" r="7" fill="#1d2230" stroke="#fff" strokeWidth="1.500" />
      <path d="M14 25l8-8" stroke="#fff" strokeWidth="1.500" />
    </svg>
    <svg width="26" height="28" viewBox="0 0 26 28" fill="none" className="ml-[9px]">
      <path d="M1 10h5l7-7v22l-7-7H1z" stroke="#fff" strokeWidth="1.300" />
      <path d="M17 9c2 3 2 7 0 10M21 5c4 5 4 13 0 18" stroke="#fff" strokeWidth="1.500" />
    </svg>
    <svg width="26" height="20" viewBox="0 0 26 20" fill="none" className="ml-[11px]">
      <rect x="1" y="1" width="20" height="18" rx="4" stroke="#fff" strokeWidth="1.500" />
      <rect x="3.500" y="3.500" width="15" height="13" rx="2" fill="#fff" />
      <rect x="22" y="7" width="3" height="6" rx="1" fill="#fff" />
    </svg>
    <div className="ml-[26px] flex flex-col items-end text-[17px] leading-[28px]">
      <span>16:11</span>
      <span>22-08-2023</span>
    </div>
    <div className="ml-[12px] flex h-[24px] w-[24px] items-center justify-center rounded-full bg-[#4cc2ff] text-[14px] text-[#111]">4</div>
  </div>
);

export default function App() {
  return (
    <div className="relative flex h-[1080px] w-[1920px] flex-col overflow-hidden bg-white font-['Noto_Sans',sans-serif] text-[#262626]">
      <TitleTabs />
      <Ribbon />
      <FormulaBar />
      <Sheet />
      <SheetTabs />
      <StatusBar />
      <Taskbar />
      <Dialog />
    </div>
  );
}
